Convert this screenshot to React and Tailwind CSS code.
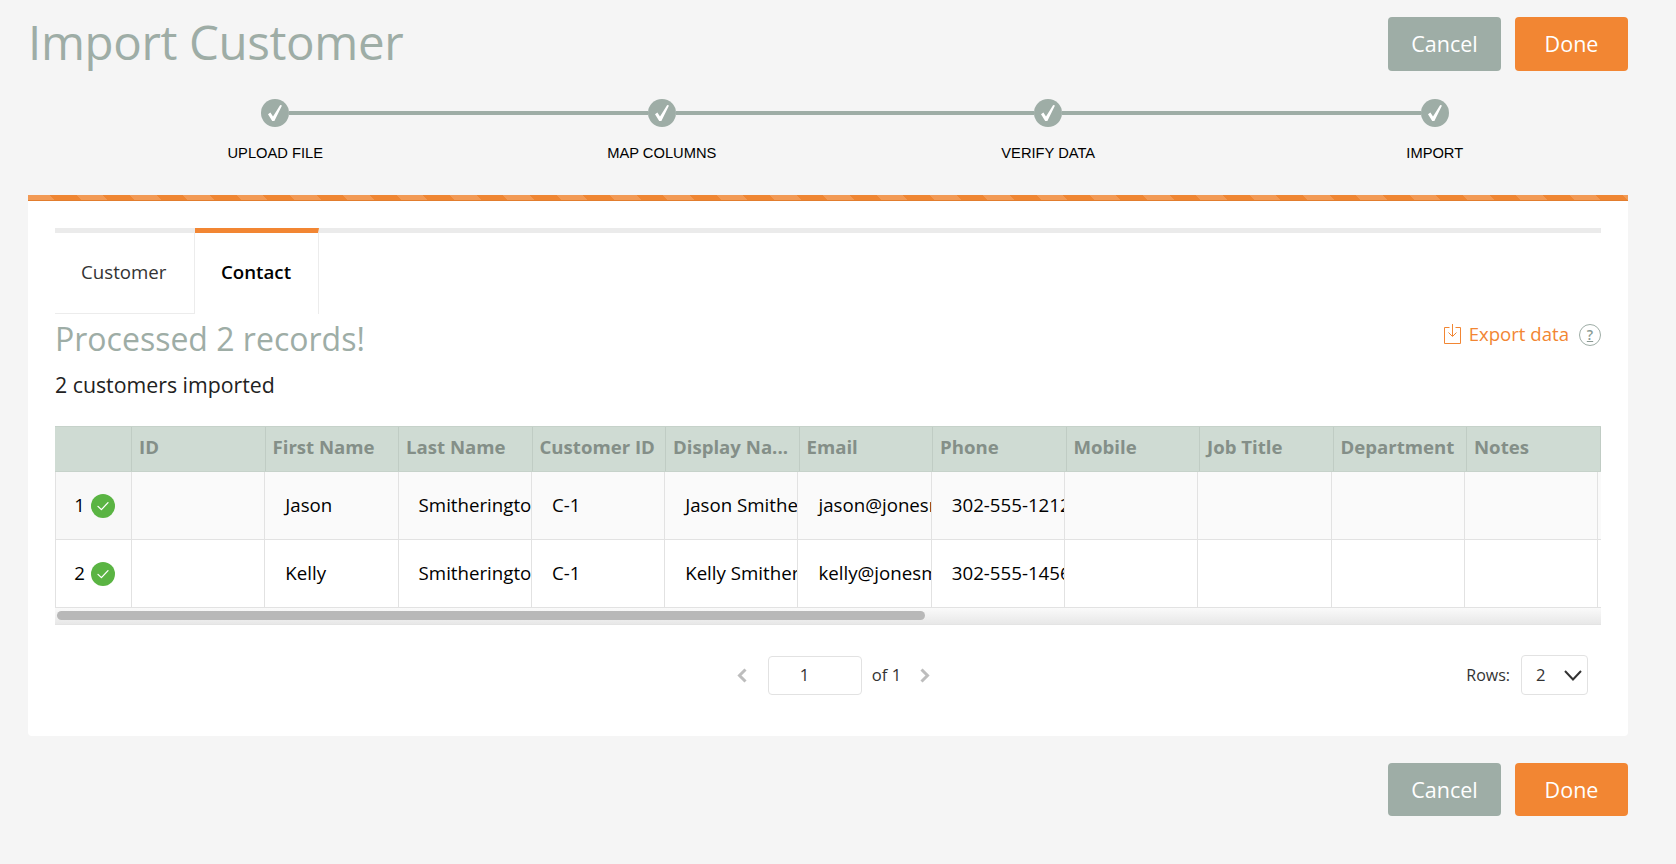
const font = "font-['Open_Sans',sans-serif]";

function Buttons({ h }) {
  const size = h === 53 ? "h-[53px]" : "h-[54px]";
  return (
    <div className="flex gap-[14px]">
      <button className={`w-[113px] ${size} pt-[1px] rounded-[4px] bg-[#9eada6] text-white text-[21.5px]`}>Cancel</button>
      <button className={`w-[113px] ${size} pt-[1px] rounded-[4px] bg-[#f28633] text-white text-[21.5px]`}>Done</button>
    </div>
  );
}

function Step({ label, first, last }) {
  return (
    <div className="flex flex-col items-stretch">
      <div className="flex items-center h-[28px]">
        <div className={first ? "flex-1 h-[4px]" : "flex-1 h-[4px] bg-[#9eada6]"} />
        <div className="w-[28px] h-[28px] rounded-full bg-[#9eada6] flex items-center justify-center shrink-0">
          <svg width="28" height="28" viewBox="0 0 28 28" className="block">
            <path d="M7 15.2 L9.4 13.4 L12 17.4 L19.2 6 L21 6.6 L13.4 22 L11.2 22 Z" fill="#fff" />
          </svg>
        </div>
        <div className={last ? "flex-1 h-[4px]" : "flex-1 h-[4px] bg-[#9eada6]"} />
      </div>
      <div className="mt-[16px] text-center text-[14.7px] leading-[20px] text-black font-['Liberation_Sans',Arial,sans-serif]">{label}</div>
    </div>
  );
}

const headers = ["ID", "First Name", "Last Name", "Customer ID", "Display Na...", "Email", "Phone", "Mobile", "Job Title", "Department", "Notes"];

const rows = [
  { n: "1", cells: ["", "Jason", "Smitherington", "C-1", "Jason Smitherington", "jason@jonesmail.com", "302-555-1212", "", "", "", ""], bg: "bg-[#fafafa]", firstBg: "bg-[#f8f8f8]" },
  { n: "2", cells: ["", "Kelly", "Smitherington", "C-1", "Kelly Smitherington", "kelly@jonesmail.com", "302-555-1456", "", "", "", ""], bg: "bg-white", firstBg: "bg-white" },
];

function Row({ row }) {
  return (
    <div className={`grid grid-cols-[77px_repeat(11,133.3px)] h-[68px] border-b border-[#e2e2e2] text-[18.7px] text-black ${row.bg}`}>
      <div className={`flex items-center justify-end gap-[6px] pr-[16px] border-l border-r border-[#e2e2e2] ${row.firstBg}`}>
        <span className="leading-none">{row.n}</span>
        <span className="w-[24px] h-[24px] rounded-full bg-[#5ab443] flex items-center justify-center">
          <svg width="14" height="14" viewBox="0 0 14 14" fill="none" stroke="#fff" strokeWidth="1.3" strokeLinecap="round" strokeLinejoin="round">
            <path d="M2 7.4 L5.4 10.6 L12 3.6" />
          </svg>
        </span>
      </div>
      {row.cells.map((c, i) => (
        <div key={i} className="border-r border-[#e2e2e2] pl-[20px] flex items-center overflow-hidden whitespace-nowrap">
          {c}
        </div>
      ))}
    </div>
  );
}

export default function App() {
  return (
    <div className={`min-h-[864px] bg-[#f5f5f5] pl-[28px] pr-[48px] ${font}`}>
      <div className="flex justify-between pt-[17px] h-[95px]">
        <h1 className="text-[47.5px] leading-[50px] font-normal tracking-[-0.37px] text-[#9eada6]">Import Customer</h1>
        <Buttons />
      </div>

      <div className="grid grid-cols-4 ml-[54px] h-[100px] pt-[4px]">
        <Step label="UPLOAD FILE" first />
        <Step label="MAP COLUMNS" />
        <Step label="VERIFY DATA" />
        <Step label="IMPORT" last />
      </div>

      <div className="bg-white rounded-b-[4px] h-[541px]">
        <div className="h-[6px] bg-[repeating-linear-gradient(45deg,#f29a55_0px,#f29a55_18.85px,#ef8633_18.85px,#ef8633_37.7px)] border-b border-[#e27d2e]" />
        <div className="px-[27px] pt-[27px]">
          <div>
            <div className="h-[5px] bg-[#ebebeb]" />
            <div className="flex h-[81px] text-[18.7px]">
              <div className="w-[140px] pl-[26px] pb-[1px] flex items-center border-b border-r border-[#ececec] text-[#333]">Customer</div>
              <div className="w-[124px] -mt-[5px] h-[86px] border-t-[5px] border-t-[#f28633] border-r border-r-[#ececec] pl-[26px] pb-[3px] flex items-center font-semibold text-black">Contact</div>
            </div>
          </div>

          <div className="flex justify-between items-start">
            <div>
              <div className="text-[32px] leading-[40px] mt-[5px] text-[#9eada6]">Processed 2 records!</div>
              <div className="text-[21.3px] leading-[28px] mt-[12px] text-[#222]">2 customers imported</div>
            </div>
            <div className="flex items-center mt-[8px]">
              <svg width="17" height="20" viewBox="0 0 17 20" fill="none" stroke="#f28633" strokeWidth="1" className="mr-[8px]">
                <path d="M5.5 3.5 H0.5 V19.5 H16.5 V3.5 H11.5" />
                <path d="M8.5 0 V12 M4.5 8.5 L8.5 12.5 L12.5 8.5" />
              </svg>
              <span className="text-[18.6px] leading-[24px] text-[#f28633]">Export data</span>
              <span className="ml-[10px] mt-[2px] w-[22px] h-[22px] rounded-full border border-[#9eada6] flex items-center justify-center text-[14px] font-semibold text-[#8a9a93] underline leading-none">?</span>
            </div>
          </div>

          <div className="mt-[27px] overflow-hidden">
            <div className="grid grid-cols-[77px_repeat(11,133.5px)] h-[46px] bg-[#cfdbd3] border-t border-b border-[#c6d2ca] text-[18.6px] font-bold text-[#848f88]">
              <div className="border-r border-[#c0ccc4]" />
              {headers.map((h) => (
                <div key={h} className="border-r border-[#c0ccc4] pl-[7px] pb-[4px] flex items-center whitespace-nowrap overflow-hidden">{h}</div>
              ))}
            </div>
            {rows.map((r) => (
              <Row key={r.n} row={r} />
            ))}
            <div className="h-[17px] bg-gradient-to-b from-[#fafafa] to-[#e8e8e8] pt-[3px] pl-[2px] border-b border-[#e4e4e4]">
              <div className="w-[868px] h-[9px] rounded-full bg-[#b8b8b8]" />
            </div>
          </div>

          <div className="relative flex items-center justify-center h-[40px] mt-[30px] text-[16.6px] text-[#333]">
            <div className="flex items-center ml-[11px]">
              <svg width="10" height="15" viewBox="0 0 10 15" fill="none" stroke="#bdbdbd" strokeWidth="3">
                <path d="M8.5 1.5 L2.5 7.5 L8.5 13.5" />
              </svg>
              <div className="w-[94px] h-[39px] ml-[21px] rounded-[4px] border border-[#e2e2e2] flex items-center pl-[31px] text-[#333]">1</div>
              <span className="ml-[10px]">of 1</span>
              <svg width="10" height="15" viewBox="0 0 10 15" fill="none" stroke="#bdbdbd" strokeWidth="3" className="ml-[19px]">
                <path d="M1.5 1.5 L7.5 7.5 L1.5 13.5" />
              </svg>
            </div>
            <div className="absolute right-[13px] top-0 flex items-center">
              <span className="text-[16px]">Rows:</span>
              <div className="ml-[11px] w-[67px] h-[40px] rounded-[4px] border border-[#e2e2e2] flex items-center pl-[14px] gap-[18px]">
                <span>2</span>
                <svg width="18" height="11" viewBox="0 0 18 11" fill="none" stroke="#333" strokeWidth="2">
                  <path d="M1 1 L9 9.5 L17 1" />
                </svg>
              </div>
            </div>
          </div>
        </div>
      </div>

      <div className="flex justify-end mt-[27px]">
        <Buttons h={53} />
      </div>
    </div>
  );
}
